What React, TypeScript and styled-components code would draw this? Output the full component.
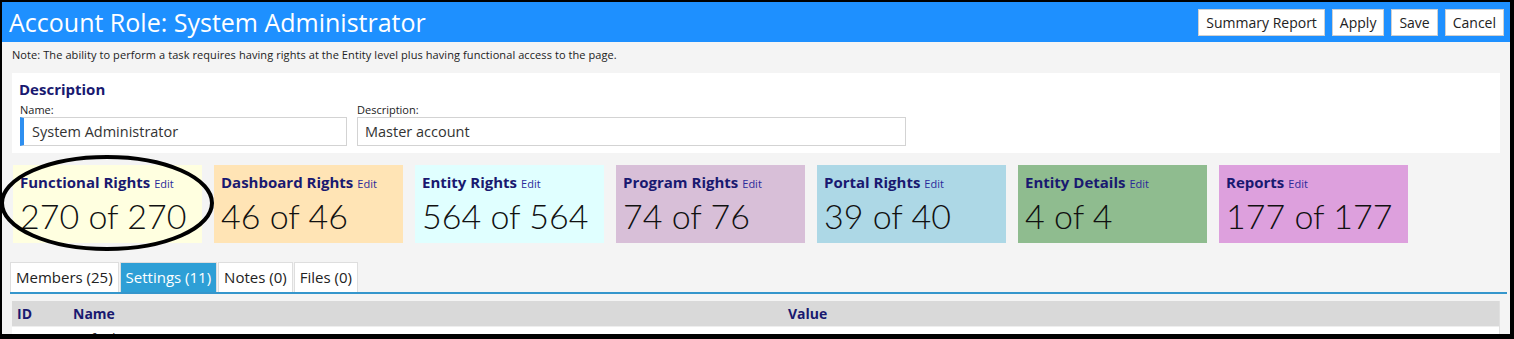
import React from "react";
import styled, { createGlobalStyle } from "styled-components";

const GlobalStyle = createGlobalStyle`
  body {
    margin: 0;
    font-family: "Segoe UI", "Open Sans", sans-serif;
    color: #222;
  }
`;

const Frame = styled.div`
  position: relative;
  width: 1514px;
  height: 339px;
  box-sizing: border-box;
  border-style: solid;
  border-color: #000;
  border-width: 2px 4px 5px 2px;
  background: #f4f4f4;
  overflow: hidden;
`;

const Header = styled.div`
  height: 40px;
  background: #1e90ff;
  display: flex;
  align-items: center;
  justify-content: space-between;
  padding: 0 6px 0 7px;
`;

const Title = styled.h1`
  margin: 0;
  color: #fff;
  font-size: 25px;
  font-weight: 400;
`;

const ButtonBar = styled.div`
  display: flex;
  gap: 7px;
`;

const Button = styled.button`
  height: 27px;
  padding: 0 7px;
  background: #fff;
  border: 1px solid #d0d0d0;
  font-family: inherit;
  font-size: 14px;
  color: #222;
`;

const Note = styled.div`
  font-size: 11px;
  padding: 5px 10px 0;
  height: 31px;
  box-sizing: border-box;
  line-height: 15px;
  letter-spacing: 0.08px;
`;

const Content = styled.div`
  padding: 0 3px 0 8px;
`;

const Panel = styled.div`
  background: #fff;
  margin: 0 7px 0 2px;
  height: 80px;
  box-sizing: border-box;
  padding: 7px 7px;
`;

const PanelTitle = styled.div`
  font-size: 15px;
  font-weight: 700;
  color: #191970;
  line-height: 18px;
  margin-bottom: 4px;
`;

const FieldRow = styled.div`
  display: flex;
  gap: 10px;
  margin-left: 1px;
`;

const Field = styled.div<{ $w: number }>`
  width: ${(p) => p.$w}px;
  display: flex;
  flex-direction: column;
`;

const Label = styled.label`
  font-size: 11px;
  line-height: 15px;
  height: 15px;
`;

const Input = styled.div<{ $accent?: boolean }>`
  height: 29px;
  box-sizing: border-box;
  border: 1px solid #d3d3d3;
  border-left: ${(p) => (p.$accent ? "4px solid #2e8ff0" : "1px solid #d3d3d3")};
  padding-left: ${(p) => (p.$accent ? "8px" : "7px")};
  font-size: 14.5px;
  line-height: 27px;
  color: #333;
  background: #fff;
`;

const CardRow = styled.div`
  display: flex;
  gap: 12px;
  margin: 12px 0 0 3px;
`;

const Card = styled.div<{ $bg: string }>`
  width: 189px;
  height: 78px;
  box-sizing: border-box;
  background: ${(p) => p.$bg};
  padding: 8px 7px;
`;

const CardTitle = styled.div`
  font-size: 15px;
  font-weight: 700;
  color: #191970;
  line-height: 18px;
  white-space: nowrap;
`;

const EditLink = styled.a`
  font-size: 11px;
  font-weight: 400;
  color: #2a2a9a;
  margin-left: 4px;
`;

const Count = styled.div`
  font-family: Lato, "Open Sans", sans-serif;
  font-weight: 300;
  font-size: 34px;
  line-height: 40px;
  margin-top: 3px;
  color: #111;
  white-space: nowrap;
`;

const Ellipse = styled.svg`
  position: absolute;
  left: -3px;
  top: 151px;
  pointer-events: none;
`;

const TabStrip = styled.div`
  display: flex;
  margin-top: 19px;
  border-bottom: 2px solid #3596cc;
`;

const Tab = styled.div<{ $active?: boolean }>`
  height: 30px;
  box-sizing: border-box;
  padding: 0 5px;
  font-size: 15px;
  line-height: 29px;
  border: 1px solid #dedede;
  border-bottom: none;
  margin-right: 1px;
  background: ${(p) => (p.$active ? "#2e9fd6" : "#fff")};
  color: ${(p) => (p.$active ? "#fff" : "#222")};
`;

const Table = styled.div`
  margin: 7px 7px 0 2px;
  border-right: 1px solid #e0e0e0;
`;

const Row = styled.div<{ $head?: boolean }>`
  display: grid;
  grid-template-columns: 56px 715px 1fr;
  height: ${(p) => (p.$head ? "25px" : "22px")};
  align-items: center;
  padding-left: 5px;
  background: ${(p) => (p.$head ? "#d9d9d9" : "#fff")};
  border-bottom: 1px solid #eee;
  font-size: 14px;
  font-weight: ${(p) => (p.$head ? 700 : 400)};
  color: ${(p) => (p.$head ? "#191970" : "#333")};
`;

const cards = [
  { title: "Functional Rights", count: "270 of 270", bg: "#ffffe0" },
  { title: "Dashboard Rights", count: "46 of 46", bg: "#ffe4b5" },
  { title: "Entity Rights", count: "564 of 564", bg: "#e0ffff" },
  { title: "Program Rights", count: "74 of 76", bg: "#d8bfd8" },
  { title: "Portal Rights", count: "39 of 40", bg: "#add8e6" },
  { title: "Entity Details", count: "4 of 4", bg: "#8fbc8f" },
  { title: "Reports", count: "177 of 177", bg: "#dda0dd" },
];

const tabs = [
  { label: "Members (25)" },
  { label: "Settings (11)", active: true },
  { label: "Notes (0)" },
  { label: "Files (0)" },
];

export default function App() {
  return (
    <>
      <GlobalStyle />
      <Frame>
        <Header>
          <Title>Account Role: System Administrator</Title>
          <ButtonBar>
            <Button>Summary Report</Button>
            <Button>Apply</Button>
            <Button>Save</Button>
            <Button>Cancel</Button>
          </ButtonBar>
        </Header>
        <Note>
          Note: The ability to perform a task requires having rights at the Entity level plus having
          functional access to the page.
        </Note>
        <Content>
          <Panel>
            <PanelTitle>Description</PanelTitle>
            <FieldRow>
              <Field $w={327}>
                <Label>Name:</Label>
                <Input $accent>System Administrator</Input>
              </Field>
              <Field $w={549}>
                <Label>Description:</Label>
                <Input>Master account</Input>
              </Field>
            </FieldRow>
          </Panel>

          <CardRow>
            {cards.map((c) => (
              <Card key={c.title} $bg={c.bg}>
                <CardTitle>
                  {c.title}
                  <EditLink>Edit</EditLink>
                </CardTitle>
                <Count>{c.count}</Count>
              </Card>
            ))}
          </CardRow>

          <TabStrip>
            {tabs.map((t) => (
              <Tab key={t.label} $active={t.active}>
                {t.label}
              </Tab>
            ))}
          </TabStrip>

          <Table>
            <Row $head>
              <span>ID</span>
              <span>Name</span>
              <span>Value</span>
            </Row>
            <Row>
              <span>00002</span>
              <span>Default Business Type</span>
              <span>Contact</span>
            </Row>
          </Table>
        </Content>

        <Ellipse width="220" height="100" viewBox="0 0 220 100">
          <ellipse cx="108" cy="50" rx="105" ry="46" fill="none" stroke="#000" strokeWidth="4" />
        </Ellipse>
      </Frame>
    </>
  );
}
